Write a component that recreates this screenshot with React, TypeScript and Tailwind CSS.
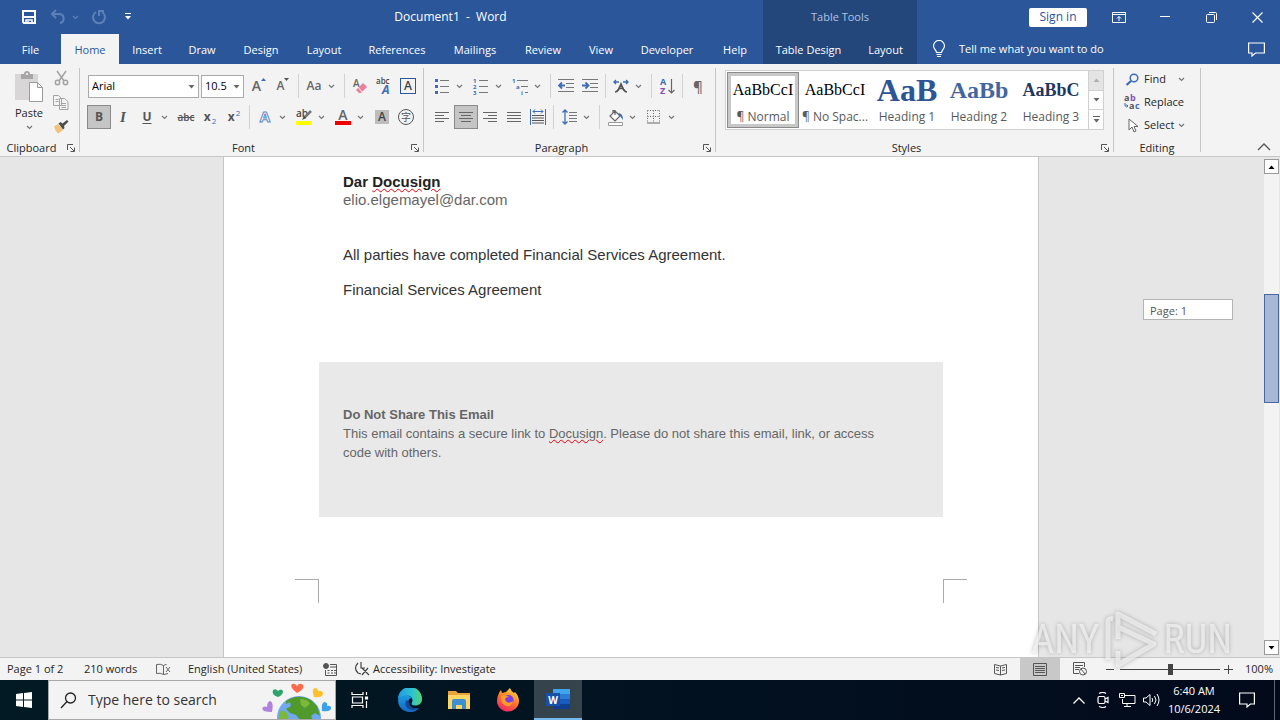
import { useState } from 'react';
import type { ReactNode } from 'react';
import clsx from 'clsx';

const TABS = [
  { name: 'File', width: 'w-[61px]' },
  { name: 'Home', width: 'w-[58px]' },
  { name: 'Insert', width: 'w-[56px]' },
  { name: 'Draw', width: 'w-[54px]' },
  { name: 'Design', width: 'w-[64px]' },
  { name: 'Layout', width: 'w-[62px]' },
  { name: 'References', width: 'w-[84px]' },
  { name: 'Mailings', width: 'w-[72px]' },
  { name: 'Review', width: 'w-[64px]' },
  { name: 'View', width: 'w-[52px]' },
  { name: 'Developer', width: 'w-[80px]' },
  { name: 'Help', width: 'w-[56px]' },
];

const STYLES = [
  { name: '¶ Normal', sample: 'AaBbCcI', look: 'text-[16px] text-black' },
  { name: '¶ No Spac...', sample: 'AaBbCcI', look: 'text-[16px] text-black' },
  { name: 'Heading 1', sample: 'AaB', look: 'text-[32px] font-bold text-[#2f5496]' },
  { name: 'Heading 2', sample: 'AaBb', look: 'text-[24px] font-bold text-[#44659f]' },
  { name: 'Heading 3', sample: 'AaBbC', look: 'text-[18px] font-bold text-[#1f3763]' },
];

export default function App() {
  const [tab, setTab] = useState('Home');
  return (
    <div className="flex h-screen flex-col overflow-hidden bg-[#e6e6e6] font-['Open_Sans',sans-serif] text-[12px] leading-4 text-[#262626]">
      <Header tab={tab} onTab={setTab} />
      <Ribbon />
      <DocumentArea />
      <StatusBar />
      <Taskbar />
    </div>
  );
}

/* Title bar and tabs */

function Header({ tab, onTab }: { tab: string; onTab: (t: string) => void }) {
  return (
    <header className="flex h-16 shrink-0 bg-[#2b579a] text-[11px] text-white">
      <div className="flex shrink-0 flex-col">
        <div className="flex h-[34px] items-center">
          <div className="flex w-[138px] items-center pl-[17px]">
            <button aria-label="Save" className="flex w-6 justify-center">
              <svg width="16" height="16" viewBox="0 0 16 16" fill="none" stroke="currentColor" strokeWidth="2">
                <path d="M2 2h12v12H3l-1-1zM2 8h12" />
                <path d="M5 14v-3h6v3M7 12v2" strokeWidth="1.500" />
              </svg>
            </button>
            <button aria-label="Undo" className="ml-2 flex w-5 justify-center text-[#5d80b8]">
              <svg width="16" height="16" viewBox="0 0 16 16" fill="none" stroke="currentColor" strokeWidth="2">
                <path d="M6 1 2 5l4 4M2 5h7c6 0 6 8 1 9" />
              </svg>
            </button>
            <Chevron className="ml-1 text-[#5d80b8]" />
            <button aria-label="Redo" className="ml-2 flex w-6 justify-center text-[#5d80b8]">
              <svg width="16" height="16" viewBox="0 0 16 16" fill="none" stroke="currentColor" strokeWidth="2">
                <path d="M5 3a6 6 0 1 0 6 0M8 7V2h5" />
              </svg>
            </button>
            <button aria-label="Customize Quick Access Toolbar" className="ml-2 flex w-5 justify-center">
              <svg width="8" height="8" viewBox="0 0 8 8" fill="currentColor">
                <path d="M1 0h6v1H1zM1 3h6L4 6.500z" />
              </svg>
            </button>
          </div>
          <h1 className="flex-1 text-center text-[12px] whitespace-pre">Document1  -  Word</h1>
        </div>
        <nav className="flex h-[30px]">
          {TABS.map((t) => (
            <button
              key={t.name}
              onClick={() => onTab(t.name)}
              className={clsx(t.width, 'h-full pt-px', t.name === tab && 'bg-[#f3f3f3] text-[#2b579a]')}
            >
              {t.name}
            </button>
          ))}
        </nav>
      </div>
      <div className="flex w-[154px] shrink-0 flex-col bg-[#23467b]">
        <div className="flex h-[34px] items-center justify-center text-[#b0c4e4]">Table Tools</div>
        <div className="flex h-[30px]">
          <button className="w-[91px] pt-px">Table Design</button>
          <button className="w-[63px] pt-px">Layout</button>
        </div>
      </div>
      <div className="flex min-w-0 flex-1 flex-col">
        <div className="flex h-[34px] items-center justify-end">
          <button className="mr-[9px] h-[19px] w-[58px] rounded-xs bg-white text-[12px] text-[#2b579a]">Sign in</button>
          <button aria-label="Ribbon Display Options" className="flex w-[46px] justify-center">
            <svg width="14" height="12" viewBox="0 0 14 12" fill="none" stroke="currentColor">
              <path d="M.5 1.500h13v10H.5zM.5 3.500h13M7 10V5.500M5 7.500l2-2 2 2" />
            </svg>
          </button>
          <button aria-label="Minimize" className="flex w-[46px] justify-center">
            <svg width="10" height="10" viewBox="0 0 10 10" stroke="currentColor"><path d="M0 4.500h10" /></svg>
          </button>
          <button aria-label="Restore" className="flex w-[46px] justify-center">
            <svg width="11" height="11" viewBox="0 0 11 11" fill="none" stroke="currentColor">
              <rect x=".5" y="2.500" width="8" height="8" rx="1" /><path d="M3 .5h6.500q1 0 1 1V8" />
            </svg>
          </button>
          <button aria-label="Close" className="flex w-[46px] justify-center">
            <svg width="11" height="11" viewBox="0 0 11 11" stroke="currentColor" strokeWidth="1.200"><path d="m.5.5 10 10M10.500.5l-10 10" /></svg>
          </button>
        </div>
        <div className="flex h-[30px] items-center px-[15px]">
          <svg width="14" height="18" viewBox="0 0 14 18" fill="none" stroke="currentColor" strokeWidth="1.200">
            <path d="M4.500 12.500C4.500 10 1.500 9 1.500 6a5.500 5.500 0 0 1 11 0c0 3-3 4-3 6.500zM4.500 14.500h5M5 16.500h4" />
          </svg>
          <input
            aria-label="Tell me what you want to do"
            placeholder="Tell me what you want to do"
            className="ml-[13px] w-52 bg-transparent outline-none placeholder:text-white"
          />
          <button aria-label="Comments" className="ml-auto">
            <svg width="17" height="15" viewBox="0 0 17 15" fill="none" stroke="currentColor" strokeWidth="1.200">
              <path d="M.6 1h15.800v10H7.500L4 14v-3H.6z" />
            </svg>
          </button>
        </div>
      </div>
    </header>
  );
}

/* Ribbon building blocks */

function Chevron({ className }: { className?: string }) {
  return (
    <svg width="7" height="5" viewBox="0 0 7 5" fill="none" stroke="currentColor" strokeWidth="1.200" className={clsx('shrink-0', className)}>
      <path d="m1 1 2.500 2.500L6 1" />
    </svg>
  );
}

function Caret({ className }: { className?: string }) {
  return (
    <svg width="7" height="4" viewBox="0 0 7 4" fill="currentColor" className={className}><path d="M.5 0h6l-3 3.500z" /></svg>
  );
}

function Sep() {
  return <div className="flex h-6 w-[7px] justify-center"><div className="border-l border-[#d2d2d2]" /></div>;
}

function Tool({ label, active, menu, children }: { label: string; active?: boolean; menu?: boolean; children: ReactNode }) {
  return (
    <button aria-label={label} className={clsx('flex h-6 shrink-0 items-center', menu ? 'w-[39px]' : 'w-6')}>
      <span className={clsx('flex w-6 shrink-0 items-center justify-center', active && 'h-6 border border-[#8a8a8a] bg-[#c5c5c5]')}>
        {children}
      </span>
      {menu && <Chevron className="ml-[2px] text-[#777]" />}
    </button>
  );
}

function Group({ label, width, launcher, children }: { label: string; width: string; launcher?: boolean; children: ReactNode }) {
  return (
    <section className={clsx(width, 'my-1 flex shrink-0 flex-col border-r border-[#c6c6c6]')}>
      <div className="min-h-0 flex-1">{children}</div>
      <div className="-mb-1 flex h-4 items-center text-[11px]">
        <span className="flex-1 text-center">{label}</span>
        {launcher && (
          <button aria-label={`${label} settings`} className="ml-1 w-3">
            <svg width="8" height="8" viewBox="0 0 8 8" fill="none" stroke="#555">
              <path d="M.5 6V.5H6M3 3l4 4M7.500 3.500v4h-4" />
            </svg>
          </button>
        )}
      </div>
    </section>
  );
}

function Lines({ rows }: { rows: string }) {
  return (
    <svg width="16" height="14" viewBox="0 0 16 14" stroke="#666" shapeRendering="crispEdges"><path d={rows} /></svg>
  );
}

function Ribbon() {
  return (
    <div className="flex h-[93px] shrink-0 border-b border-[#c6c6c6] bg-[#f3f3f3]">
      <ClipboardGroup />
      <FontGroup />
      <ParagraphGroup />
      <StylesGroup />
      <EditingGroup />
      <div className="flex flex-1 items-end justify-end pr-[9px] pb-[5px]">
        <button aria-label="Collapse the Ribbon">
          <svg width="14" height="8" viewBox="0 0 14 8" fill="none" stroke="#555" strokeWidth="1.300"><path d="m1 7 6-6 6 6" /></svg>
        </button>
      </div>
    </div>
  );
}

function ClipboardGroup() {
  return (
    <Group label="Clipboard" width="w-20" launcher>
      <div className="flex items-start">
        <button className="flex w-[46px] flex-col items-center pt-[3px] pl-3">
          <svg width="30" height="32" viewBox="0 0 30 32">
            <path fill="#d8d6d6" d="M1 3h23v26H1z" />
            <path fill="#a6a6a6" d="M7 3h3a3 3 0 0 1 6 0h3v5H7z" />
            <circle cx="13" cy="3" r="1" fill="#fff" />
            <path fill="#fff" stroke="#9b9b9b" d="M15.500 11.500h8l5 5v14h-13zM23.500 11.500v5h5" />
          </svg>
          <span className="mt-[2px] text-[11px]">Paste</span>
          <Chevron className="mt-1 text-[#777]" />
        </button>
        <div className="-mt-[2px] flex flex-col pl-[3px]">
          <Tool label="Cut">
            <svg width="15" height="16" viewBox="0 0 15 16" fill="none" stroke="#a3a3a3" strokeWidth="1.500">
              <path d="m3 1 7 10M12 1 5 11" /><circle cx="3.500" cy="12.500" r="2.200" /><circle cx="11.500" cy="12.500" r="2.200" />
            </svg>
          </Tool>
          <Tool label="Copy">
            <svg width="16" height="15" viewBox="0 0 16 15" fill="#f3f3f3" stroke="#a3a3a3">
              <path d="M.5.5h5l3 3v7h-8zM2.500 4.500h3M2.500 6.500h3M6.500 3.500h5l3.500 3v8H6.500zM8.500 8.500h4.500M8.500 10.500h4.500M8.500 12.500h4.500" />
            </svg>
          </Tool>
          <Tool label="Format Painter">
            <svg width="16" height="15" viewBox="0 0 16 15">
              <path fill="#f0c27a" d="M1 7.500 5 5l5 6-4.500 3.500Q2 12 1 7.500z" />
              <path fill="#4d4d4d" d="m5.500 4.500 2-1.500 2 1.500L14 1l1.500 1.500L11 7l.5 2-1.500 1.500z" />
            </svg>
          </Tool>
        </div>
      </div>
    </Group>
  );
}

function Combo({ label, width, options }: { label: string; width: string; options: string[] }) {
  return (
    <div className={clsx(width, 'relative')}>
      <select aria-label={label} className="h-[23px] w-full appearance-none border border-[#ababab] bg-white pl-[3px] text-[11px] text-black">
        {options.map((o) => <option key={o}>{o}</option>)}
      </select>
      <Caret className="pointer-events-none absolute top-[10px] right-[4px] text-[#666]" />
    </div>
  );
}

function FontGroup() {
  return (
    <Group label="Font" width="w-[344px]" launcher>
      <div className="flex h-9 items-center pl-2">
        <Combo label="Font" width="mr-[2px] w-[111px]" options={['Arial', 'Calibri', 'Times New Roman']} />
        <Combo label="Font Size" width="mr-[3px] w-[43px]" options={['10.5', '11', '12', '14']} />
        <Tool label="Increase Font Size">
          <span className="text-[14px] font-semibold text-[#666]">A</span><Triangle up />
        </Tool>
        <Tool label="Decrease Font Size">
          <span className="text-[12px] font-semibold text-[#666]">A</span><Triangle />
        </Tool>
        <Sep />
        <Tool label="Change Case" menu><span className="text-[12px] font-semibold text-[#666]">Aa</span></Tool>
        <Sep />
        <Tool label="Clear All Formatting">
          <svg width="16" height="17" viewBox="0 0 16 17" className="overflow-visible">
            <text x="1" y="9" fontSize="10" fontWeight="600" fill="#666">A</text>
            <path fill="#e8829b" d="m11 5 4 4-6 6H7l-3-3z" /><path stroke="#f3f3f3" d="m6 9 4 5" />
          </svg>
        </Tool>
        <Tool label="Phonetic Guide">
          <svg width="17" height="18" viewBox="0 0 17 18" className="overflow-visible">
            <text x="0" y="7" fontSize="8" fontWeight="600" fill="#444">abc</text>
            <text x="6" y="17" fontSize="12" fontStyle="italic" fontWeight="bold" fill="#3e6db5">A</text>
          </svg>
        </Tool>
        <Tool label="Character Border">
          <span className="flex size-4 items-center justify-center border border-[#2b579a] text-[12px] font-semibold text-[#444]">A</span>
        </Tool>
      </div>
      <div className="flex h-[26px] items-center pl-[7px] text-[#555]">
        <Tool label="Bold" active><b>B</b></Tool>
        <Tool label="Italic"><i className="font-['Liberation_Serif',serif] text-[15px] font-bold">I</i></Tool>
        <Tool label="Underline" menu><b className="underline underline-offset-2">U</b></Tool>
        <Tool label="Strikethrough"><s className="text-[10px] font-semibold">abc</s></Tool>
        <Tool label="Subscript"><b>x</b><span className="mt-2 ml-px text-[8px] text-[#3e6db5]">2</span></Tool>
        <Tool label="Superscript"><b>x</b><span className="mb-2 ml-px text-[8px] text-[#3e6db5]">2</span></Tool>
        <Sep />
        <Tool label="Text Effects" menu>
          <svg width="18" height="18" viewBox="0 0 18 18" className="overflow-visible">
            <text x="9" y="14" textAnchor="middle" fontSize="15" fontWeight="bold" fill="#fff" stroke="#5b8ac9">A</text>
          </svg>
        </Tool>
        <Tool label="Text Highlight Color" menu>
          <svg width="17" height="18" viewBox="0 0 17 18" className="overflow-visible">
            <text x="0" y="9" fontSize="10" fontWeight="600" fill="#444">ab</text>
            <path stroke="#777" strokeWidth="2.500" d="m15 3-7 7" /><path fill="#444" d="m8 8 2 2-4 2z" />
            <path fill="#ff0" d="M0 13h16v4H0z" />
          </svg>
        </Tool>
        <Tool label="Font Color" menu>
          <svg width="16" height="18" viewBox="0 0 16 18" className="overflow-visible">
            <text x="8" y="12" textAnchor="middle" fontSize="14" fontWeight="600" fill="#666">A</text><path fill="#e00" d="M0 13h16v4H0z" />
          </svg>
        </Tool>
        <Tool label="Character Shading">
          <span className="flex size-[14px] items-center justify-center bg-[#bdbdbd] text-[12px] font-semibold text-[#444]">A</span>
        </Tool>
        <Tool label="Enclose Characters">
          <span className="flex size-4 items-center justify-center rounded-full border border-[#555] font-['Noto_Sans_CJK_SC',sans-serif] text-[10px]">字</span>
        </Tool>
      </div>
    </Group>
  );
}

function Triangle({ up }: { up?: boolean }) {
  return (
    <svg width="5" height="4" viewBox="0 0 5 4" fill={up ? '#3e6db5' : '#555'} className="mb-3">
      <path d={up ? 'M2.500 0 5 3H0z' : 'M0 0h5L2.500 3z'} />
    </svg>
  );
}

function ParagraphGroup() {
  return (
    <Group label="Paragraph" width="w-[292px]" launcher>
      <div className="flex h-9 items-center pl-[6px]">
        <Tool label="Bullets" menu>
          <svg width="15" height="15" viewBox="0 0 15 15"><path fill="#3e6db5" d="M0 0h3v3H0zM0 6h3v3H0zM0 12h3v3H0z" /><path stroke="#777" d="M5 1.500h9M5 7.500h9M5 13.500h9" /></svg>
        </Tool>
        <Tool label="Numbering" menu>
          <svg width="16" height="17" viewBox="0 0 16 17" className="overflow-visible"><g fontSize="6" fontWeight="bold" fill="#3e6db5"><text x="0" y="5">1</text><text x="0" y="11">2</text><text x="0" y="17">3</text></g><path stroke="#777" d="M6 2.500h9M6 8.500h9M6 14.500h9" /></svg>
        </Tool>
        <Tool label="Multilevel List" menu>
          <svg width="17" height="17" viewBox="0 0 17 17" className="overflow-visible"><g fontSize="6" fontWeight="bold" fill="#3e6db5"><text x="0" y="5">1</text><text x="4" y="11">a</text><text x="9" y="17">i</text></g><path stroke="#777" d="M5 2.500h11M9 8.500h7M13 14.500h3" /></svg>
        </Tool>
        <Sep />
        <Tool label="Decrease Indent">
          <svg width="16" height="14" viewBox="0 0 16 14"><path stroke="#777" d="M0 .5h16M8 4.500h8M8 8.500h8M0 12.500h16" /><path fill="none" stroke="#3e6db5" strokeWidth="1.800" d="M7 6.500H1.500M4 3.500l-3 3 3 3" /></svg>
        </Tool>
        <Tool label="Increase Indent">
          <svg width="16" height="14" viewBox="0 0 16 14"><path stroke="#777" d="M0 .5h16M8 4.500h8M8 8.500h8M0 12.500h16" /><path fill="none" stroke="#3e6db5" strokeWidth="1.800" d="M0 6.500h6M3.500 3.500l3 3-3 3" /></svg>
        </Tool>
        <Sep />
        <Tool label="Asian Layout" menu>
          <svg width="16" height="14" viewBox="0 0 16 14" fill="none">
            <path stroke="#555" strokeWidth="1.700" d="M2 13c3 0 4-3 6-8 2 5 3 8 6 8M5 9.500h6" />
            <path stroke="#3e6db5" strokeWidth="1.400" d="M6 3H1M3 1 1 3l2 2M10 3h5M13 1l2 2-2 2" />
          </svg>
        </Tool>
        <Sep />
        <Tool label="Sort">
          <svg width="15" height="17" viewBox="0 0 15 17" className="overflow-visible">
            <g fontSize="9" fontWeight="bold"><text x="0" y="7" fill="#3e6db5">A</text><text x="0" y="16" fill="#8c4fb0">Z</text></g>
            <path fill="none" stroke="#666" strokeWidth="1.200" d="M11.500 1v14M8.500 12l3 3 3-3" />
          </svg>
        </Tool>
        <Sep />
        <Tool label="Show/Hide ¶"><span className="text-[15px] font-semibold text-[#666]">¶</span></Tool>
      </div>
      <div className="flex h-[26px] items-center pl-[6px]">
        <Tool label="Align Left"><Lines rows="M1 2.500h14M1 5.500h9M1 8.500h14M1 11.500h9" /></Tool>
        <Tool label="Center" active><Lines rows="M1 2.500h14M3 5.500h10M1 8.500h14M3 11.500h10" /></Tool>
        <Tool label="Align Right"><Lines rows="M1 2.500h14M6 5.500h9M1 8.500h14M6 11.500h9" /></Tool>
        <Tool label="Justify"><Lines rows="M1 2.500h14M1 5.500h14M1 8.500h14M1 11.500h14" /></Tool>
        <Tool label="Distributed">
          <svg width="16" height="16" viewBox="0 0 16 16" fill="none">
            <path stroke="#3e6db5" d="M.5 0v16M15.500 0v16M3 2.500h10M5 .5l-2 2 2 2M11 .5l2 2-2 2" />
            <path stroke="#555" d="M2 6.500h12M2 9h12M2 11.500h12M2 14h12" />
          </svg>
        </Tool>
        <Sep />
        <Tool label="Line Spacing" menu>
          <svg width="15" height="16" viewBox="0 0 15 16" fill="none">
            <path stroke="#3e6db5" strokeWidth="1.300" d="M3 1v14M.5 3.500 3 1l2.500 2.500M.5 12.500 3 15l2.500-2.500" />
            <path stroke="#777" d="M7 3.500h8M7 6.500h8M7 9.500h8M7 12.500h8" />
          </svg>
        </Tool>
        <Sep />
        <Tool label="Shading" menu>
          <svg width="17" height="17" viewBox="0 0 17 17" fill="none">
            <path stroke="#666" strokeWidth="1.200" fill="#fff" d="m8 2 5 5-5 5-5-5zM6 5V1.500h2V6" />
            <path fill="#3e6db5" d="M11 4q5 0 5 7l-3-4z" /><path stroke="#999" fill="#fff" d="M1.500 13.500h14v3h-14z" />
          </svg>
        </Tool>
        <Tool label="Borders" menu>
          <svg width="14" height="14" viewBox="0 0 14 14" fill="none" stroke="#666" strokeDasharray="1 1.500">
            <path d="M.5.5h12M.5 6.500h12M.5.5v12M6.500.5v12M12.500.5v12" /><path d="M0 13h13" strokeDasharray="none" />
          </svg>
        </Tool>
      </div>
    </Group>
  );
}

function StylesGroup() {
  return (
    <Group label="Styles" width="w-[398px]" launcher>
      <div className="mt-[2px] ml-[9px] flex h-[60px] w-[379px] border border-[#d0d0d0] bg-white pl-px">
        {STYLES.map((s, i) => (
          <div key={s.name} className="relative w-[72px] shrink-0">
            {i === 0 && <div className="absolute inset-px inset-x-0 border border-[#8a8a8a] outline-3 -outline-offset-4 outline-[#c8c8c8]" />}
            <button className="relative flex w-full flex-col items-center">
              <span className={clsx("flex h-[38px] items-center font-['Liberation_Serif',serif]", s.look)}>{s.sample}</span>
              <span className="whitespace-nowrap text-[#595959]">{s.name}</span>
            </button>
          </div>
        ))}
        <div className="ml-auto flex w-[15px] flex-col border-l border-[#d0d0d0] text-[#666]">
          <button aria-label="Row up" className="flex flex-1 items-center justify-center bg-[#e4e4e4] text-[#b0b0b0]"><Caret className="rotate-180" /></button>
          <button aria-label="Row down" className="flex flex-1 items-center justify-center border-y border-[#d0d0d0]"><Caret /></button>
          <button aria-label="More styles" className="flex flex-1 flex-col items-center justify-center gap-[2px]">
            <span className="w-[7px] border-t" /><Caret />
          </button>
        </div>
      </div>
    </Group>
  );
}

function EditingGroup() {
  return (
    <Group label="Editing" width="w-[87px]">
      <div className="text-[11px]">
        <button className="flex h-[22px] items-center pl-[11px]">
          <svg width="15" height="13" viewBox="0 0 15 13" fill="none" stroke="#3e6db5"><circle cx="9" cy="5" r="3.800" strokeWidth="1.500" /><path strokeWidth="2.300" d="m6 8-4.500 4" /></svg>
          <span className="ml-[4px]">Find</span>
          <Chevron className="ml-3 text-[#777]" />
        </button>
        <button className="flex h-6 items-center pl-[10px]">
          <svg width="17" height="17" viewBox="0 0 17 17" fontSize="9" fontWeight="bold" className="overflow-visible">
            <text x="0" y="7" fill="#555">a</text><text x="6" y="7" fill="#8c4fb0">b</text>
            <text x="5" y="15" fill="#555">a</text><text x="11" y="15" fill="#3e6db5">c</text>
            <path fill="none" stroke="#3e6db5" d="M1 9v3h3M2.500 10.500 4 12l-1.500 1.500" />
          </svg>
          <span className="ml-[3px]">Replace</span>
        </button>
        <button className="flex h-[22px] items-center pl-[14px]">
          <svg width="11" height="15" viewBox="0 0 11 15" fill="#fff" stroke="#666"><path d="M1 1v11l3-3 2 5 2-1-2-4.500h4z" /></svg>
          <span className="ml-[5px]">Select</span>
          <Chevron className="ml-[4px] text-[#777]" />
        </button>
      </div>
    </Group>
  );
}

/* Document */

function Misspelled({ children }: { children: ReactNode }) {
  return <span className="underline decoration-red-600 decoration-wavy decoration-1 underline-offset-1">{children}</span>;
}

function DocumentArea() {
  return (
    <main className="relative flex min-h-0 flex-1">
      <div className="min-w-0 flex-1 overflow-hidden">
        <article className="mx-auto h-full w-[816px] border-x border-[#c6c6c6] bg-white px-[95px] pt-4 font-['Liberation_Sans',Arial,sans-serif] text-[15px] leading-[18px] text-[#333]">
          <div className="px-6">
            <p className="font-bold text-[#222]">Dar <Misspelled>Docusign</Misspelled></p>
            <p className="text-[#666]">elio.elgemayel@dar.com</p>
            <p className="mt-[37px]">All parties have completed Financial Services Agreement.</p>
            <p className="mt-[17px]">Financial Services Agreement</p>
          </div>
          <div className="mt-[63px] h-[155px] bg-[#e9e9e9] px-6 pt-11 text-[13px] leading-[19px] text-[#666]">
            <p className="leading-[18px] font-bold">Do Not Share This Email</p>
            <p>
              This email contains a secure link to <Misspelled>Docusign</Misspelled>. Please do not share this email, link, or access
              <br />
              code with others.
            </p>
          </div>
          <div className="-mx-6 mt-[62px] flex justify-between">
            <span className="size-6 border-t border-r border-[#ababab]" />
            <span className="size-6 border-t border-l border-[#ababab]" />
          </div>
        </article>
      </div>
      <div className="flex w-[18px] flex-col justify-between pt-[2px] pr-px pb-[2px] pl-[2px]">
        <button aria-label="Scroll up" className="flex h-[15px] items-center justify-center border border-[#999] bg-white text-black"><Caret className="rotate-180" /></button>
        <div className="flex-1 bg-[#f3f3f3] pt-[120px]"><div className="h-[109px] border border-[#4a68a0] bg-[#a6b8d6]" /></div>
        <button aria-label="Scroll down" className="flex h-[15px] items-center justify-center border border-[#999] bg-white text-black"><Caret /></button>
      </div>
      <div className="absolute top-[142px] right-[47px] h-[21px] w-[90px] border border-[#b5b5b5] bg-white px-[6px] text-[11px] leading-[21px] text-[#555]">Page: 1</div>
      <Watermark />
    </main>
  );
}

function Watermark() {
  return (
    <div className="pointer-events-none absolute right-[48px] -bottom-[14px] z-10 flex items-center font-['Roboto_Condensed','Liberation_Sans_Narrow',sans-serif] text-[40px] leading-none text-white/60 drop-shadow-[0_0_2px_#888]">
      <span>ANY</span>
      <svg width="56" height="62" viewBox="0 0 56 62" fill="none" stroke="currentColor" strokeWidth="5" strokeLinejoin="round" className="mx-1">
        <path d="M4 51V13q0-4 5-3M14 30V5l38 20M14 18l36 17-36 21V42" />
      </svg>
      <span>RUN</span>
    </div>
  );
}

/* Status bar */

function StatusBar() {
  const [zoom, setZoom] = useState(100);
  return (
    <footer className="flex h-[23px] shrink-0 items-center border-t border-[#c6c6c6] bg-[#f3f3f3] pl-[7px] text-[11px]">
      <span className="w-[77px]">Page 1 of 2</span>
      <span className="w-[72px]">210 words</span>
      <svg width="15" height="13" viewBox="0 0 15 13" fill="none" stroke="#666">
        <path d="M7.500 2.500q-3-2-7-1v9q4-1 7 1zM7.500 11.500V2.500q1.500-1 3-1M8 11.500l4-1M10 4l4 5M14 4l-4 5" />
      </svg>
      <span className="ml-[17px] w-[135px]">English (United States)</span>
      <svg width="14" height="13" viewBox="0 0 14 13" fill="none" stroke="#555">
        <circle cx="3" cy="3" r="2.500" fill="#555" /><path d="M7 1.500h6.500v11h-11V7M7 4h6M4.500 7.500h2M8 7.500h2M11 7.500h2M4.500 10h2M8 10h2M11 10h2" />
      </svg>
      <button className="ml-[17px] flex items-center gap-[3px]">
        <svg width="16" height="14" viewBox="0 0 16 14" fill="none" stroke="#444" strokeWidth="1.200">
          <path d="M4 1q-5 5 0 10l3 1M7 0v6h4M8 6l7 7M14 6l-6 7" />
        </svg>
        Accessibility: Investigate
      </button>
      <button aria-label="Read Mode" className="ml-auto flex w-10 justify-center">
        <svg width="13" height="13" viewBox="0 0 13 13" fill="none" stroke="#555"><path d="M.5 1.500 6.500 3l6-1.500v9l-6 1.500-6-1.500zM6.500 3v9M2 4.500l3 .5M2 7l3 .5M8 5l3-.5M8 7.500l3-.5" /></svg>
      </button>
      <button aria-label="Print Layout" className="flex h-full w-10 items-center justify-center bg-[#c8c8c8]">
        <svg width="14" height="13" viewBox="0 0 14 13" fill="none" stroke="#555"><path d="M.5.5h13v12H.5zM2 3.500h10M2 5.500h10M2 7.500h10M2 9.500h10" /></svg>
      </button>
      <button aria-label="Web Layout" className="flex w-10 justify-center">
        <svg width="14" height="14" viewBox="0 0 14 14" fill="none" stroke="#555"><path d="M6 11.500H.5V.5h11V5M2 3.500h8M2 5.500h5M2 7.500h4" /><circle cx="10" cy="9.500" r="3.500" /><path d="m8 7 4 5" /></svg>
      </button>
      <button aria-label="Zoom Out" className="flex w-5 justify-center">
        <svg width="8" height="9" viewBox="0 0 8 9" stroke="#444"><path d="M0 4.500h8" /></svg>
      </button>
      <input
        type="range"
        aria-label="Zoom"
        min={0}
        max={200}
        value={zoom}
        onChange={(e) => setZoom(Number(e.target.value))}
        className="h-3 w-[100px] appearance-none bg-transparent [&::-webkit-slider-runnable-track]:h-px [&::-webkit-slider-runnable-track]:bg-[#444] [&::-webkit-slider-thumb]:-mt-[5px] [&::-webkit-slider-thumb]:h-[11px] [&::-webkit-slider-thumb]:w-[5px] [&::-webkit-slider-thumb]:appearance-none [&::-webkit-slider-thumb]:bg-[#444]"
      />
      <button aria-label="Zoom In" className="ml-[2px] flex w-3 justify-center">
        <svg width="9" height="9" viewBox="0 0 9 9" stroke="#444"><path d="M0 4.500h9M4.500 0v9" /></svg>
      </button>
      <span className="w-[46px] pl-[11px]">{zoom}%</span>
    </footer>
  );
}

/* Windows taskbar */

function Taskbar() {
  return (
    <div className="flex h-10 shrink-0 bg-linear-to-r from-[#021a24] to-[#020a1c] text-white">
      <button aria-label="Start" className="flex w-12 items-center justify-center">
        <svg width="16" height="16" viewBox="0 0 16 16" fill="currentColor"><path d="m0 2 7-1v6.500H0zM8 1l8-1v7.500H8zM0 8.500h7V15l-7-1zM8 8.500h8V16l-8-1z" /></svg>
      </button>
      <div className="flex w-72 items-center border border-[#a8a8a8] bg-[#f3f3f3] pl-[11px]">
        <svg width="17" height="17" viewBox="0 0 17 17" fill="none" stroke="#222" strokeWidth="1.300"><circle cx="10.500" cy="6" r="5" /><path d="m7 9.500-6 6.500" /></svg>
        <input
          aria-label="Search"
          placeholder="Type here to search"
          className="ml-[11px] min-w-0 flex-1 bg-transparent text-[14px] outline-none placeholder:text-[#333]"
        />
        <Globe />
      </div>
      <button aria-label="Task View" className="flex w-12 items-center justify-center">
        <svg width="18" height="16" viewBox="0 0 18 16" fill="none" stroke="currentColor" strokeWidth="1.200"><path d="M1 0v2.500h11V0M1 16v-2.500h11V16M1.500 5h10v6h-10zM15.500 0v3M15.500 9v7" /><path fill="currentColor" d="M14.500 5h2v2h-2z" /></svg>
      </button>
      <div className="flex gap-[1px] pl-[2px]">
        <button aria-label="Microsoft Edge" className="flex w-12 items-center justify-center"><Edge /></button>
        <button aria-label="File Explorer" className="flex w-12 items-center justify-center">
          <svg width="22" height="20" viewBox="0 0 22 20">
            <path fill="#e8a33d" d="M0 1h8l2 2h12v5H0z" /><path fill="#ffd563" d="M0 5h22v14H0z" />
            <path fill="#3d8fd1" d="M4 11q0-2 2-2h10q2 0 2 2v8h-4v-4H8v4H4z" /><path fill="#ffd563" d="M8 16h6v3H8z" />
          </svg>
        </button>
        <button aria-label="Firefox" className="flex w-12 items-center justify-center"><Firefox /></button>
        <button aria-label="Word" className="ml-px flex w-12 items-center justify-center border-b-2 border-[#76b9ed] bg-[#35434c]">
          <svg width="24" height="21" viewBox="0 0 24 21">
            <path fill="#41a5ee" d="M7 0h17v6H7z" /><path fill="#2b7cd3" d="M7 5h17v6H7z" /><path fill="#185abd" d="M7 10h17v6H7z" /><path fill="#103f91" d="M7 15h17v5H7z" />
            <path fill="#1651aa" d="M0 4h14v13H0z" />
            <text x="7" y="14.500" textAnchor="middle" fontSize="10" fontWeight="bold" fill="#fff">W</text>
          </svg>
        </button>
      </div>
      <div className="ml-auto flex items-center">
        <button aria-label="Show hidden icons" className="flex w-6 justify-center">
          <svg width="12" height="7" viewBox="0 0 12 7" fill="none" stroke="currentColor" strokeWidth="1.300"><path d="m.5 6.500 5.500-5.500 5.500 5.500" /></svg>
        </button>
        <button aria-label="Meet Now" className="flex w-6 justify-center">
          <svg width="12" height="16" viewBox="0 0 12 16" fill="none" stroke="currentColor" strokeWidth="1.200"><rect x="1" y="4.500" width="7" height="7" rx="1.500" /><path d="m8 7 3-1.500v5L8 9M2 1.500q4-2 7 0M2 14.500q4 2 7 0" /></svg>
        </button>
        <button aria-label="Network" className="flex w-6 justify-center">
          <svg width="17" height="14" viewBox="0 0 17 14" fill="none" stroke="currentColor"><path d="M6 2.500h10v8H3.500V6M8 10.500v3M5 13.500h7M.5.5h5v4h-5zM2 2.500h2" /></svg>
        </button>
        <button aria-label="Volume" className="flex w-6 justify-center">
          <svg width="17" height="14" viewBox="0 0 17 14" fill="none" stroke="currentColor"><path d="M.5 5H3l4-3.500v11L3 9H.5zM9 5q1.500 2 0 4M11.500 3q3 4 0 8M14 1q4 6 0 12" /></svg>
        </button>
        <button className="w-[62px] text-center text-[11px] leading-[18px]">6:40 AM<br />10/6/2024</button>
        <button aria-label="Notifications" className="flex w-11 justify-center">
          <svg width="16" height="16" viewBox="0 0 16 16" fill="none" stroke="currentColor" strokeWidth="1.200"><path d="M.6 1h14.800v11h-4l-3.400 3v-3H.6z" /></svg>
        </button>
        <div className="ml-[5px] h-10 w-[6px] border-l border-[#5b6570]" />
      </div>
    </div>
  );
}

function Globe() {
  return (
    <svg width="72" height="37" viewBox="0 0 72 37" className="mr-px">
      <circle cx="37" cy="36" r="22" fill="#6fa8f5" />
      <path fill="#4f9a2b" d="M24 19q12-8 25-1l6 6 3 10-5-3-4 3 2 4H38l-4-5-6-2-4-4 5-3-1-4-4 2z" />
      <path fill="#7cb83a" d="M38 17q8 0 10 5l-5 4-4-3zM19 28l5 2 3 5-2 3h-8q-1-5 2-10z" />
      <path fill="#ff6b4a" d="M35 11Q27 5 30 2q3-1 5 2 3-4 6-1 2 4-6 8z" />
      <path fill="#2ea36b" d="M16 15Q9 13 11 8q3-2 5 1 3-3 5 0 0 4-5 6z" />
      <path fill="#ffc02e" d="M52 15Q49 7 53 6q3 0 3 3 5-1 5 3-1 4-9 3z" />
      <path fill="#b181e0" d="M10 30Q-2 30 1 25q2-1 4 0 0-5 3-6 4 1 2 11z" />
      <path fill="#3ba0ea" d="M60 29q-1-9 3-9 3 1 2 4 4-1 4 2 0 4-9 3z" />
    </svg>
  );
}

function Edge() {
  return (
    <svg width="24" height="24" viewBox="0 0 24 24">
      <defs>
        <linearGradient id="edgeTop" x1="0" x2="1"><stop offset="0" stopColor="#1f9be6" /><stop offset=".6" stopColor="#2fc3d0" /><stop offset="1" stopColor="#57d66b" /></linearGradient>
        <linearGradient id="edgeBody" x1="0" y1="0" x2="0" y2="1"><stop offset="0" stopColor="#1b9de2" /><stop offset="1" stopColor="#1565c0" /></linearGradient>
      </defs>
      <path fill="url(#edgeTop)" d="M0 11A12 12 0 0 1 24 11c0 5-4 6.500-7 6.500s-4-1-3-3c2-5-3-8-7-6Q2 8 0 11z" />
      <path fill="url(#edgeBody)" d="M0 12a12 12 0 0 0 21 8q-2 .5-5 .5c-5 0-8-5-5-9q1-2 3-1-3-4-8-3-5 1-6 4.500z" />
      <path fill="#114a9c" d="M8.500 12c-4 6 3 13.500 12.500 8-5 1.500-10-1-10-6.500z" />
    </svg>
  );
}

function Firefox() {
  return (
    <svg width="24" height="24" viewBox="0 0 24 24">
      <defs>
        <linearGradient id="foxFire" x1=".8" y1="0" x2=".3" y2="1"><stop offset="0" stopColor="#ffdf3d" /><stop offset=".5" stopColor="#ff7a26" /><stop offset="1" stopColor="#f0236b" /></linearGradient>
      </defs>
      <path fill="url(#foxFire)" d="M3 5q1-2 2-3l1 3 4-1 4-4q1 3 4 5l1-1q4 4 4 9a11 10.500 0 0 1-22 0q0-4 2-8z" />
      <circle cx="12.500" cy="12" r="5" fill="#7a3fe0" />
      <path fill="#ff9a2b" d="M5 8q4-2 8 1-4 0-4 3 3 5 8 1-1 6-7 5-6-3-5-10z" />
    </svg>
  );
}
